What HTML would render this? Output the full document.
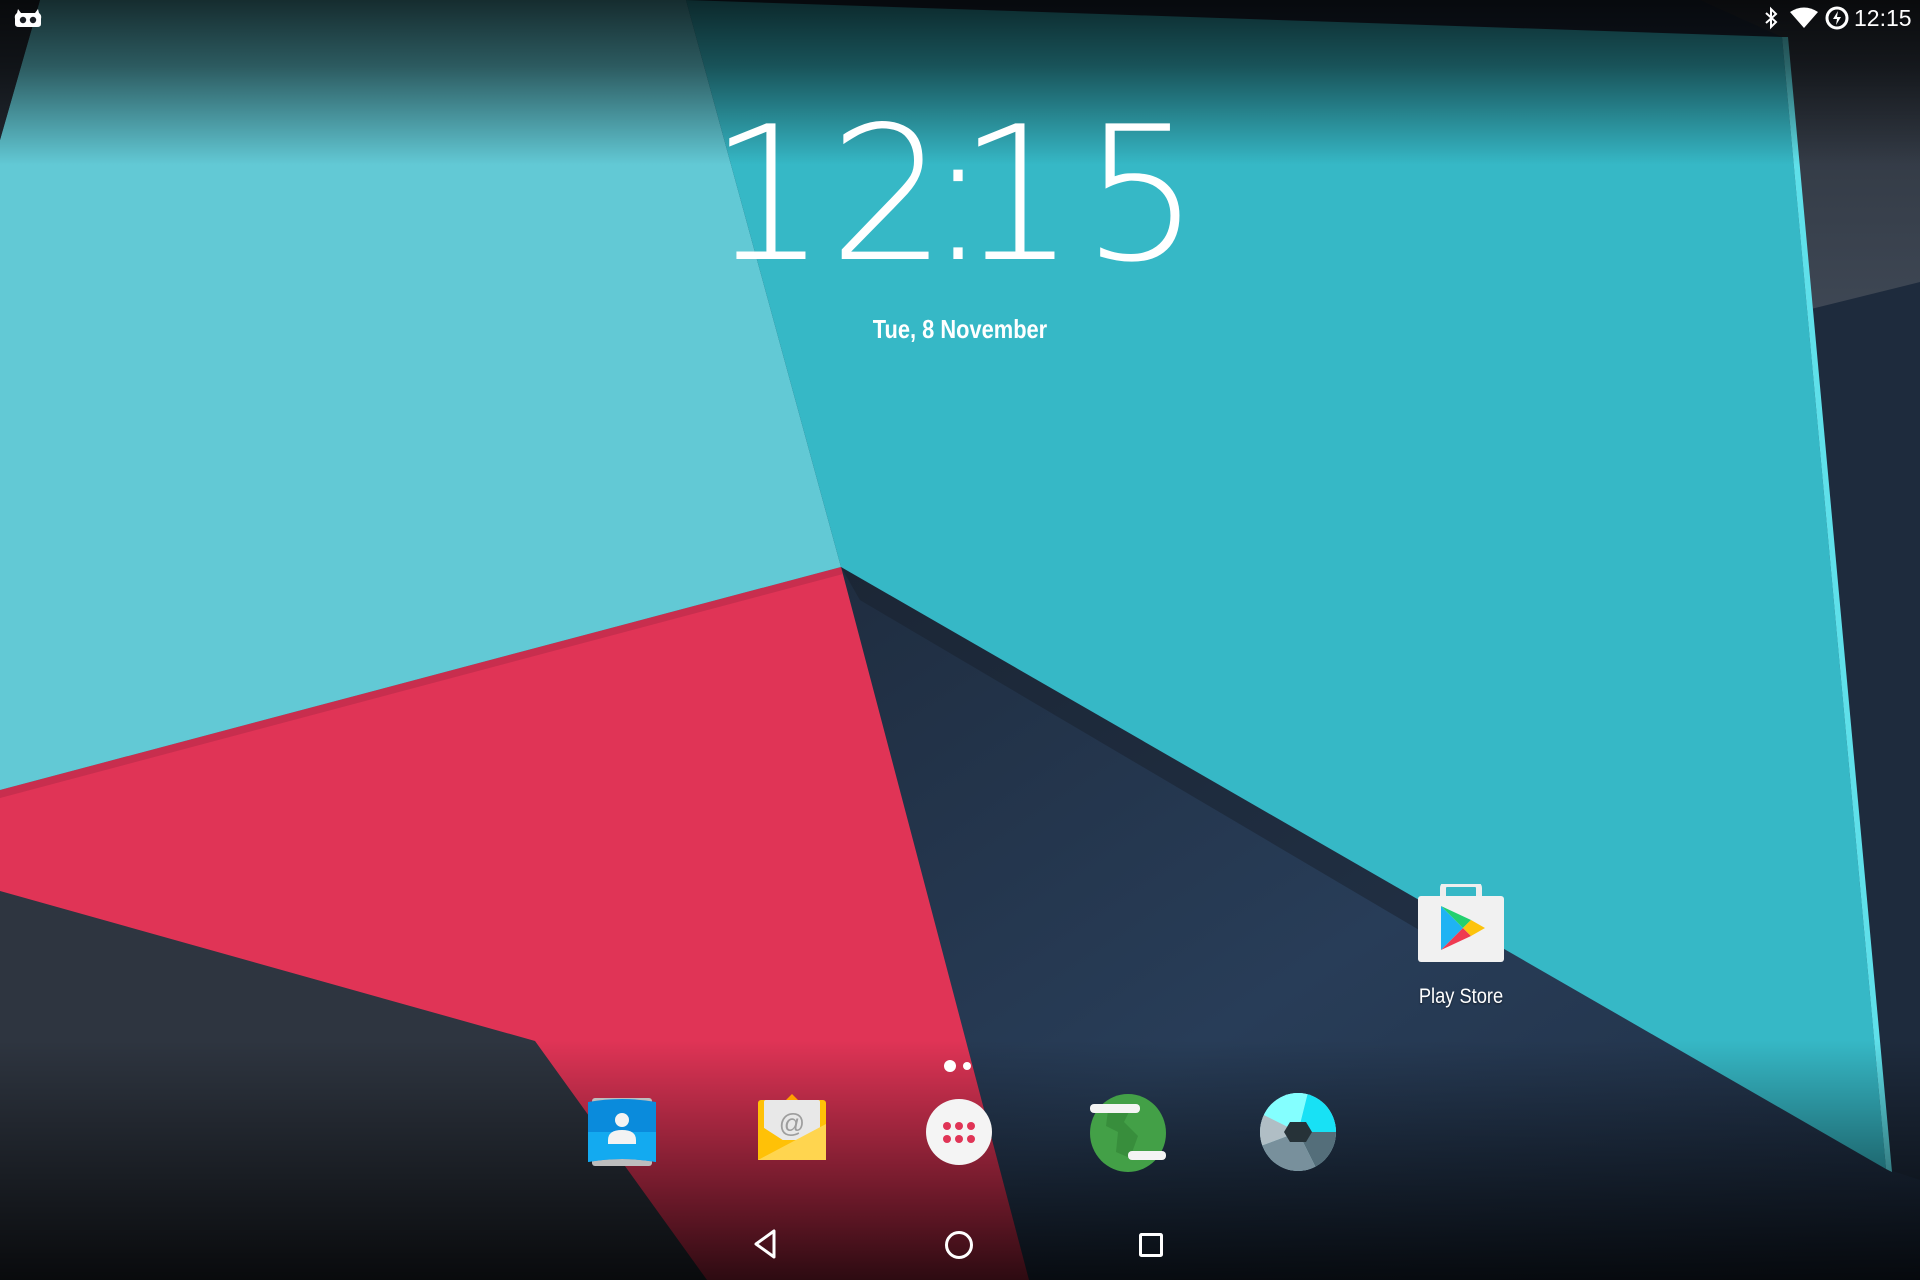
<!DOCTYPE html>
<html><head><meta charset="utf-8"><style>
html,body{margin:0;padding:0;width:1920px;height:1280px;overflow:hidden;background:#1b2433;font-family:"Liberation Sans",sans-serif}
.abs{position:absolute}
svg{display:block}
.d{position:absolute;top:100px;font-family:"DejaVu Sans","Liberation Sans",sans-serif;font-weight:200;font-size:186px;color:#fff;line-height:190px;width:0;display:flex;justify-content:center;white-space:nowrap}
</style></head><body>
<svg class="abs" style="left:0;top:0" width="1920" height="1280" viewBox="0 0 1920 1280">
<defs>
<linearGradient id="top" x1="0" y1="0" x2="0" y2="1"><stop offset="0" stop-color="#000" stop-opacity=".78"/><stop offset=".4" stop-color="#000" stop-opacity=".55"/><stop offset="1" stop-color="#000" stop-opacity="0"/></linearGradient>
<linearGradient id="bot" x1="0" y1="0" x2="0" y2="1"><stop offset="0" stop-color="#000" stop-opacity="0"/><stop offset="1" stop-color="#000" stop-opacity=".8"/></linearGradient>
<linearGradient id="gray" x1="0" y1="0" x2="0" y2="1"><stop offset="0" stop-color="#2a3039"/><stop offset="1" stop-color="#3e4754"/></linearGradient>
<linearGradient id="navy" x1="0" y1="0" x2="1" y2="1"><stop offset="0" stop-color="#1f2d40"/><stop offset=".5" stop-color="#283d58"/><stop offset="1" stop-color="#1f2e43"/></linearGradient>
</defs>
<rect width="1920" height="1280" fill="#1e2b3d"/>
<polygon points="1700,0 1920,0 1920,282 1807,310 1782,37" fill="url(#gray)"/>
<polygon points="841,567 1886,1169 1920,1180 1920,1280 1029,1280" fill="url(#navy)"/>
<polygon points="841,567 1500,945 1470,960 860,600" fill="#17202c" opacity=".5"/>
<polygon points="0,891 535,1041 707,1280 0,1280" fill="#2e3540"/>
<polygon points="0,790 841,567 1029,1280 707,1280 535,1041 0,891" fill="#e03456"/>
<polygon points="0,790 841,567 843,574 0,798" fill="#b02845" opacity=".5"/>
<polygon points="40,0 686,0 841,567 0,790 0,140" fill="#62c9d5"/>
<polygon points="0,0 40,0 0,140" fill="#252c35"/>
<polygon points="686,0 1782,37 1886,1169 841,567" fill="#36b8c6"/>
<polygon points="1782,37 1788,37 1892,1172 1886,1169" fill="#5fe0ea"/>
<rect width="1920" height="165" fill="url(#top)"/>
<rect y="1040" width="1920" height="240" fill="url(#bot)"/>
</svg>

<!-- status bar -->
<svg class="abs" style="left:14px;top:6px" width="28" height="22" viewBox="0 0 28 22">
<path d="M4 3 L7 7 L21 7 L24 3 L25 7 Q28 9 27 13 L27 18 Q27 21 23 21 L5 21 Q1 21 1 18 L1 13 Q0 9 3 7 Z" fill="#fff"/>
<circle cx="9" cy="14" r="3.2" fill="#1a1e24"/><circle cx="19" cy="14" r="3.2" fill="#1a1e24"/>
</svg>
<svg class="abs" style="left:1762px;top:6px" width="18" height="24" viewBox="0 0 18 24"><path d="M4 7 L14 16 L9 21 L9 3 L14 8 L4 17" fill="none" stroke="#fff" stroke-width="2"/></svg>
<svg class="abs" style="left:1790px;top:7px" width="28" height="22" viewBox="0 0 28 22"><path d="M0 5 Q14 -4 28 5 L14 21 Z" fill="#fff"/></svg>
<svg class="abs" style="left:1824px;top:5px" width="26" height="26" viewBox="0 0 26 26"><circle cx="13" cy="13" r="10" fill="none" stroke="#fff" stroke-width="3"/><path d="M14 6 L9 14 L13 14 L12 20 L17 12 L13 12 Z" fill="#fff"/></svg>
<div class="abs" style="left:1854px;top:4px;font-size:23px;color:#fff;line-height:28px">12:15</div>

<!-- clock -->
<div class="d" style="left:768px">1</div>
<div class="d" style="left:888px">2</div>
<div class="d" style="left:958px">:</div>
<div class="d" style="left:1017px">1</div>
<div class="d" style="left:1141px">5</div>
<div class="abs" style="left:760px;width:400px;top:314px;text-align:center;color:#fff;font-weight:bold;font-size:26px;line-height:30px;transform:scaleX(.84)">Tue, 8 November</div>

<!-- Play store -->
<svg class="abs" style="left:1417px;top:884px" width="88" height="80" viewBox="0 0 88 80">
<rect x="26" y="0" width="36" height="16" rx="4" fill="none" stroke="#eee" stroke-width="6"/>
<rect x="1" y="12" width="86" height="66" rx="3" fill="#f1f1f1"/>
<path d="M24 22 L24 66 L46 44 Z" fill="#1fb3f3"/>
<path d="M24 22 L46 44 L54 36 Z" fill="#23d06f"/>
<path d="M24 66 L46 44 L54 52 Z" fill="#ef3b52"/>
<path d="M46 44 L54 36 L68 44 L54 52 Z" fill="#fdc30c"/>
</svg>
<div class="abs" style="left:1361px;width:200px;top:984px;text-align:center;color:#fff;font-size:21px;line-height:26px;text-shadow:0 1px 2px rgba(0,0,0,.5);transform:scaleX(.87)">Play Store</div>

<!-- page dots -->
<div class="abs" style="left:944px;top:1060px;width:12px;height:12px;border-radius:50%;background:#fff"></div>
<div class="abs" style="left:963px;top:1062px;width:8px;height:8px;border-radius:50%;background:#fff"></div>

<!-- dock -->
<svg class="abs" style="left:586px;top:1096px" width="72" height="72" viewBox="0 0 72 72">
<rect x="6" y="2" width="60" height="68" rx="3" fill="#bdbdbd"/>
<path d="M2 6 Q36 0 70 6 L70 66 Q36 60 2 66 Z" fill="#0a8bdc"/>
<path d="M2 36 L70 36 L70 66 Q36 60 2 66 Z" fill="#13aaf0"/>
<circle cx="36" cy="24" r="7" fill="#f3f3f3"/><path d="M22 44 Q22 34 36 34 Q50 34 50 44 L50 48 L22 48 Z" fill="#f3f3f3"/>
</svg>
<svg class="abs" style="left:752px;top:1094px" width="80" height="74" viewBox="0 0 80 74">
<path d="M40 0 L48 8 L32 8 Z" fill="#ffa000"/>
<rect x="6" y="6" width="68" height="60" rx="3" fill="#ffc107"/>
<rect x="12" y="6" width="56" height="40" rx="2" fill="#e8e8e8"/>
<text x="40" y="38" text-anchor="middle" font-family="Liberation Sans" font-size="26" fill="#9e9e9e">@</text>
<path d="M6 30 L40 52 L74 30 L74 66 L6 66 Z" fill="#ffc107"/>
<path d="M6 66 L74 30 L74 66 Z" fill="#ffd54f"/>
</svg>
<svg class="abs" style="left:925px;top:1098px" width="68" height="68" viewBox="0 0 68 68">
<circle cx="34" cy="34" r="33" fill="#f4f4f4"/>
<g fill="#e03456"><circle cx="22" cy="28" r="4"/><circle cx="34" cy="28" r="4"/><circle cx="46" cy="28" r="4"/><circle cx="22" cy="41" r="4"/><circle cx="34" cy="41" r="4"/><circle cx="46" cy="41" r="4"/></g>
</svg>
<svg class="abs" style="left:1088px;top:1092px" width="80" height="80" viewBox="0 0 80 80">
<ellipse cx="40" cy="41" rx="38" ry="39" fill="#43a047"/>
<path d="M20 18 L44 14 L36 30 L50 44 L42 66 L28 60 L30 40 L18 34 Z" fill="#388e3c"/>
<rect x="2" y="12" width="50" height="9" rx="4" fill="#f4f4f4"/>
<rect x="40" y="59" width="38" height="9" rx="4" fill="#f4f4f4"/>
</svg>
<svg class="abs" style="left:1258px;top:1092px" width="80" height="80" viewBox="0 0 80 80">
<defs><clipPath id="c"><ellipse cx="40" cy="40" rx="38" ry="39"/></clipPath></defs>
<g clip-path="url(#c)">
<rect width="80" height="80" fill="#b2ebf2"/>
<path d="M40 40 L50 0 L80 0 L80 40 Z" fill="#18e1f5"/>
<path d="M40 40 L80 40 L80 80 L60 80 Z" fill="#546e7a"/>
<path d="M40 40 L60 80 L0 80 L0 55 Z" fill="#78909c"/>
<path d="M40 40 L0 55 L0 20 Z" fill="#b0bec5"/>
<path d="M40 40 L0 20 L0 0 L50 0 Z" fill="#84ffff"/>
<polygon points="32,30 48,30 54,40 48,50 32,50 26,40" fill="#263238"/>
</g>
</svg>

<!-- nav -->
<svg class="abs" style="left:752px;top:1228px" width="28" height="32" viewBox="0 0 28 32"><path d="M22 3 L22 29 L4 16 Z" fill="none" stroke="#fff" stroke-width="3" stroke-linejoin="round"/></svg>
<svg class="abs" style="left:944px;top:1230px" width="30" height="30" viewBox="0 0 30 30"><circle cx="15" cy="15" r="12.5" fill="none" stroke="#fff" stroke-width="3"/></svg>
<svg class="abs" style="left:1138px;top:1232px" width="26" height="26" viewBox="0 0 26 26"><rect x="2.5" y="2.5" width="21" height="21" rx="1" fill="none" stroke="#fff" stroke-width="3"/></svg>
</body></html>
